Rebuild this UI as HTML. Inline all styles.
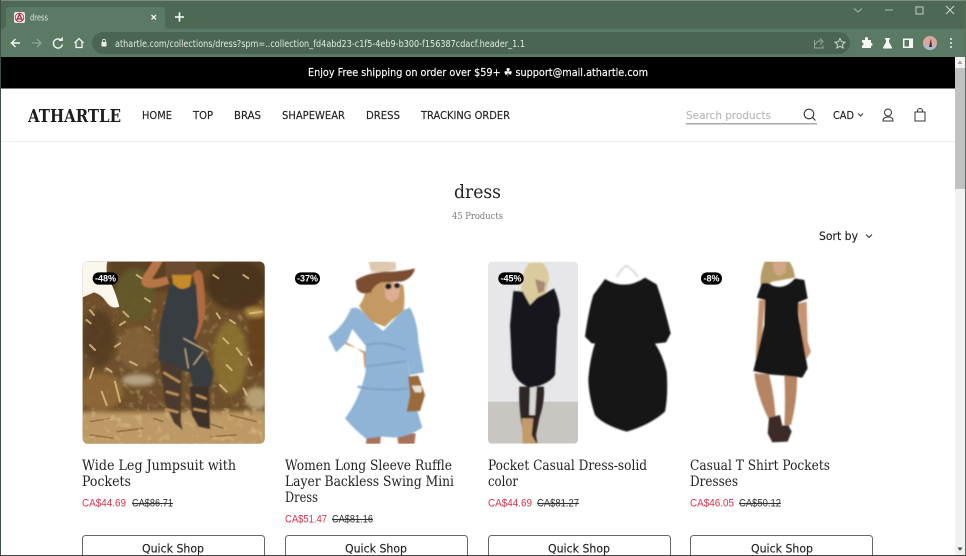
<!DOCTYPE html>
<html><head><meta charset="utf-8"><title>dress</title>
<style>
html,body{margin:0;padding:0;width:966px;height:556px;overflow:hidden;background:#fff}
svg{display:block}
.s{font-family:"DejaVu Sans","Liberation Sans",sans-serif}
.r{font-family:"DejaVu Serif","Liberation Serif",serif}
.t{font-family:"DejaVu Serif","Liberation Serif",serif;font-size:13.5px;fill:#222}
.n{font-family:"DejaVu Sans","Liberation Sans",sans-serif;font-size:10.500px;fill:#222;stroke:#222;stroke-width:.15}
.p{font-family:"Liberation Sans",sans-serif;font-size:11px;fill:#d8324e}
.o{font-family:"Liberation Sans",sans-serif;font-size:11px;fill:#333;text-decoration:line-through}
.b{font-family:"Liberation Sans",sans-serif;font-size:9px;fill:#fff;text-anchor:middle;font-weight:700}
.q{font-family:"DejaVu Sans","Liberation Sans",sans-serif;font-size:11.500px;fill:#222;stroke:#222;stroke-width:.15}
</style></head><body>
<svg width="966" height="556" viewBox="0 0 966 556" xmlns="http://www.w3.org/2000/svg">
<defs>
<filter id="bl" x="-10%" y="-10%" width="120%" height="120%"><feGaussianBlur stdDeviation="2.200"/></filter>
<filter id="bs" x="-10%" y="-10%" width="120%" height="120%"><feGaussianBlur stdDeviation="6"/></filter>
<filter id="nz" x="0" y="0" width="100%" height="100%"><feTurbulence type="fractalNoise" baseFrequency=".04" numOctaves="3" seed="7"/><feGaussianBlur stdDeviation="1.500"/><feColorMatrix values="0 0 0 0 .14  0 0 0 0 .08  0 0 0 0 .02  2.200 0 0 0 -.85"/></filter>
<filter id="nl" x="0" y="0" width="100%" height="100%"><feTurbulence type="fractalNoise" baseFrequency=".05" numOctaves="2" seed="21"/><feGaussianBlur stdDeviation="1.500"/><feColorMatrix values="0 0 0 0 .85  0 0 0 0 .68  0 0 0 0 .38  0 3 0 0 -1.600"/></filter>
<clipPath id="c1"><rect x="38" y="20" width="546" height="546" rx="15"/></clipPath>
<clipPath id="c3"><rect x="24" y="20" width="270" height="546" rx="12"/></clipPath>
<clipPath id="c2"><rect x="0" y="20" width="600" height="546"/></clipPath>
</defs>
<rect width="966" height="556" fill="#fff"/>
<!-- browser chrome -->
<rect width="966" height="57" fill="#4d6954"/>
<rect y="0" width="966" height="1" fill="#7d8f82"/>
<rect y="29" width="966" height="28" fill="#5a7a64"/>
<path d="M1 29Q6 29 6 24V11Q6 7 10 7H161Q165 7 165 11V24Q165 29 170 29Z" fill="#5a7a64"/>
<rect x="92" y="32" width="758" height="22" rx="11" fill="#4a6652"/>
<rect x="14" y="12" width="11" height="11" rx="2" fill="#f0e8e8"/>
<path d="M16.500 21L19.500 14L22.500 21M17.500 19H21.500" stroke="#a02c3c" stroke-width="1.300" fill="none"/>
<circle cx="19.500" cy="17.500" r="4.300" fill="none" stroke="#a02c3c" stroke-width=".8"/>
<text x="30" y="20.500" class="s" font-size="9" fill="#dfe8e2" textLength="18" lengthAdjust="spacingAndGlyphs">dress</text>
<path d="M151.500 15L156 19.500M156 15L151.500 19.500" stroke="#eef3ef" stroke-width="1.300"/>
<path d="M179.500 12.500V21.500M175 17H184" stroke="#fff" stroke-width="1.600"/>
<path d="M854 8.500L858 12L862 8.500" stroke="#a9baae" fill="none"/>
<path d="M885 10H893" stroke="#a9baae"/>
<rect x="916" y="7" width="7" height="7" fill="none" stroke="#c4d0c8"/>
<path d="M946 6L954 14M954 6L946 14" stroke="#c9d5cd"/>
<path d="M20 43H11.500M15.500 39L11.500 43L15.500 47" stroke="#f3f6f4" stroke-width="1.400" fill="none"/>
<path d="M41 43H32M37 39L41 43L37 47" stroke="#8ea594" stroke-width="1.300" fill="none"/>
<path d="M61.500 40.500A4.600 4.600 0 1 0 62.500 44.500" stroke="#f3f6f4" stroke-width="1.400" fill="none"/>
<path d="M58.500 41H62.800V36.800Z" fill="#f3f6f4"/>
<path d="M74.500 43L79 38.500L83.500 43M76 42V47.500H82V42" stroke="#f3f6f4" stroke-width="1.300" fill="none"/>
<rect x="101.500" y="42" width="5" height="4.500" rx=".5" fill="#e8eee9"/>
<path d="M102.500 42V40.800A1.500 1.500 0 0 1 105.500 40.800V42" stroke="#e8eee9" fill="none" stroke-width=".8"/>
<text x="115" y="47" class="s" font-size="9.500" fill="#e2eae4" textLength="410" lengthAdjust="spacingAndGlyphs">athartle.com/collections/dress?spm=..collection_fd4abd23-c1f5-4eb9-b300-f156387cdacf.header_1.1</text>
<path d="M818 41H822M820 38.500L823 41.500L820 44.500M820 41Q816 41 815.500 45M814.500 40V48H823V45.500" stroke="#94a89a" fill="none"/>
<path d="M840 38.500L841.500 41.800L845 42.200L842.400 44.500L843.100 48L840 46.200L836.900 48L837.600 44.500L835 42.200L838.500 41.800Z" stroke="#c9d5cd" fill="none" stroke-width="1"/>
<path d="M862 40H865V38.500A1.500 1.500 0 0 1 868 38.500V40H871V43A1.500 1.500 0 0 1 871 46V48H862V45.500A1.500 1.500 0 0 0 862 42.500Z" fill="#f5f7f5"/>
<path d="M885 38H890V39L889 40V42L892 47.500Q892.500 48.500 891 48.500H884Q882.500 48.500 883 47.500L886 42V40L885 39Z" fill="#f5f7f5"/>
<rect x="903" y="38.500" width="10" height="9.500" fill="#f5f7f5"/><rect x="904.500" y="40" width="4.500" height="6.500" fill="#5a7a64"/>
<circle cx="930" cy="43" r="7" fill="#d8a8a0"/><path d="M923.500 45.500A7 7 0 0 0 936.500 45.500Z" fill="#a9bcd4"/><path d="M929 47L931 38.500L932 47Z" fill="#4a2a2a"/>
<circle cx="951" cy="39" r="1" fill="#eef2ef"/><circle cx="951" cy="43" r="1" fill="#eef2ef"/><circle cx="951" cy="47" r="1" fill="#eef2ef"/>
<!-- banner -->
<rect x="1" y="57" width="954" height="31.500" fill="#000"/>
<text x="308" y="76" class="s" font-size="10.800" fill="#fff" stroke="#fff" stroke-width=".15" textLength="340" lengthAdjust="spacingAndGlyphs">Enjoy Free shipping on order over $59+ ☘ support@mail.athartle.com</text>
<!-- header -->
<rect x="1" y="141" width="954" height="1" fill="#eee"/>
<text x="28" y="122" class="r" font-size="18" font-weight="700" fill="#1c1c1c" textLength="93" lengthAdjust="spacingAndGlyphs">ATHARTLE</text>
<text x="142" y="119" class="n" textLength="30" lengthAdjust="spacingAndGlyphs">HOME</text>
<text x="193" y="119" class="n" textLength="20" lengthAdjust="spacingAndGlyphs">TOP</text>
<text x="234" y="119" class="n" textLength="27" lengthAdjust="spacingAndGlyphs">BRAS</text>
<text x="282" y="119" class="n" textLength="63" lengthAdjust="spacingAndGlyphs">SHAPEWEAR</text>
<text x="366" y="119" class="n" textLength="34" lengthAdjust="spacingAndGlyphs">DRESS</text>
<text x="421" y="119" class="n" textLength="89" lengthAdjust="spacingAndGlyphs">TRACKING ORDER</text>
<text x="686" y="119" class="s" font-size="11" fill="#b8b8b8" stroke="#b8b8b8" stroke-width=".15" textLength="85" lengthAdjust="spacingAndGlyphs">Search products</text>
<rect x="686" y="123" width="131" height="1.500" fill="#aaa"/>
<circle cx="809" cy="114" r="4.800" fill="none" stroke="#333" stroke-width="1.100"/><path d="M812.500 117.500L815.500 120.500" stroke="#333" stroke-width="1.100"/>
<text x="833" y="119" class="s" font-size="10.500" fill="#222" stroke="#222" stroke-width=".15" textLength="21" lengthAdjust="spacingAndGlyphs">CAD</text>
<path d="M858 113.500L860.500 116L863 113.500" stroke="#333" fill="none"/>
<circle cx="888" cy="112.500" r="3.500" fill="none" stroke="#333" stroke-width="1"/><path d="M883 121V120.500Q883 117 888 117Q893 117 893 120.500V121Z" fill="none" stroke="#333" stroke-width="1"/>
<rect x="915" y="112" width="10" height="9" fill="none" stroke="#333" stroke-width="1"/><path d="M917.500 112V111A2.500 2.500 0 0 1 922.500 111V112" fill="none" stroke="#333" stroke-width="1"/>
<!-- collection heading -->
<text x="454" y="198" class="r" font-size="19" fill="#222" textLength="47" lengthAdjust="spacingAndGlyphs">dress</text>
<text x="452" y="219" class="r" font-size="9.500" fill="#777" textLength="51" lengthAdjust="spacingAndGlyphs">45 Products</text>
<text x="819" y="240" class="s" font-size="11.500" fill="#222" stroke="#222" stroke-width=".15" textLength="39" lengthAdjust="spacingAndGlyphs">Sort by</text>
<path d="M866 234.500L869 237.500L872 234.500" stroke="#333" fill="none"/>
<!-- image 1 -->
<g transform="translate(70 255) scale(.33333)"><g clip-path="url(#c1)">
<rect x="0" y="0" width="620" height="600" fill="#70502c"/>
<rect x="38" y="20" width="546" height="546" filter="url(#nz)" opacity=".5"/>
<rect x="38" y="130" width="546" height="436" filter="url(#nl)" opacity=".35"/>
<g filter="url(#bs)" opacity=".88">
<rect x="120" y="0" width="500" height="110" fill="#5a4024"/>
<ellipse cx="195" cy="120" rx="60" ry="80" fill="#625a2a"/>
<ellipse cx="85" cy="250" rx="50" ry="85" fill="#553e24"/>
<ellipse cx="200" cy="280" rx="55" ry="65" fill="#84643a"/>
<ellipse cx="500" cy="90" rx="90" ry="75" fill="#46301a"/>
<ellipse cx="480" cy="310" rx="50" ry="110" fill="#8c7432"/>
<ellipse cx="565" cy="250" rx="30" ry="100" fill="#66401f"/>
<ellipse cx="555" cy="172" rx="30" ry="14" fill="#c09a44"/>
<ellipse cx="205" cy="375" rx="50" ry="18" fill="#bfae90"/>
<ellipse cx="90" cy="410" rx="70" ry="55" fill="#916a38"/>
<ellipse cx="560" cy="430" rx="34" ry="34" fill="#c0ab7e"/>
<rect x="0" y="470" width="620" height="130" fill="#c8a46e"/>
</g>
<path d="M30 20H112Q105 50 118 75Q135 105 148 155Q125 165 108 140Q95 118 72 112Q55 120 30 130Z" fill="#fbf7ec"/>
<path d="M60 165L72 180M50 195L62 205M150 210L165 200M225 215L240 225M135 275L150 265M60 270L75 285M180 320L200 330M110 340L125 350M70 340L60 370M135 380L150 440M95 410L110 450M440 175L450 190M480 195L495 205M460 250L475 265M500 280L515 300M470 330L485 345M535 310L545 330M450 390L470 410M520 400L530 420M540 175L575 170M160 170L175 185M225 130L240 140M200 60L215 70M430 60L445 70M520 60L535 70" stroke="#dcc08e" stroke-width="6" stroke-linecap="round" fill="none" opacity=".8"/>
<path d="M60 500L120 490M140 530L220 520M250 490L280 500M400 500L460 520M480 480L560 500M60 540L130 550M420 545L500 540" stroke="#8a6238" stroke-width="5" fill="none" opacity=".7"/>
<rect x="38" y="460" width="546" height="106" filter="url(#nl)" opacity=".4"/>
<g filter="url(#bl)">
<path d="M285 18H378Q385 50 368 65L310 72L288 65Z" fill="#6c4c30"/>
<path d="M250 15C238 40 214 62 214 84C224 108 268 98 298 86L290 64C268 70 254 74 246 72C258 55 270 35 280 15Z" fill="#b87646"/>
<path d="M368 58Q388 30 398 60Q408 130 405 180Q395 225 375 255L352 282L345 240L372 190L375 90Z" fill="#af6a3e"/>
<path d="M306 60H366L360 98Q335 115 310 95Z" fill="#c68a2c"/>
<path d="M300 88L314 90Q335 112 362 92L378 85L386 200Q380 235 372 250Q410 300 430 350L422 395L395 412L370 400L360 352L300 336L265 315L270 210Z" fill="#393c43"/>
<path d="M270 315L335 340L332 500L338 525L312 503L285 440Z" fill="#4c3a2e"/>
<path d="M360 395L416 395L420 522L386 515L366 480Z" fill="#3e3029"/>
<path d="M280 352L330 382M288 410L326 420M378 420L410 432M370 462L410 470M285 462L325 472" stroke="#c49658" stroke-width="7"/>
<path d="M340 250L415 290M400 290L370 330M345 280L355 340" stroke="#dcc08e" stroke-width="3" fill="none"/>
</g></g>
<rect x="68" y="52" width="76" height="37" rx="18" fill="#000"/></g>
<text x="105.500" y="281.500" class="b">-48%</text>
<!-- image 2 -->
<g transform="translate(275 255) scale(.33333)"><g filter="url(#bl)" clip-path="url(#c2)">
<path d="M265 295Q240 275 215 262L180 285L170 250L212 268L272 290Q280 315 268 342Z" fill="#c99878"/>
<path d="M276 540H318L315 572H272ZM366 535H422L418 572H370Z" fill="#a87258"/>
<path d="M280 20Q320 14 362 22L364 50L290 55Z" fill="#dccab0"/>
<path d="M290 45Q320 60 362 40L364 52L290 60Z" fill="#efe6d6"/>
<path d="M272 100Q270 130 252 152Q265 175 290 200L330 215L350 195L385 170Q392 130 385 90L300 70Z" fill="#c49a62"/>
<path d="M326 85H378L370 130L350 142L332 128Z" fill="#dcae92"/>
<path d="M242 76Q280 50 345 50Q390 48 420 40Q412 72 378 80L318 82Q295 92 288 112Q255 122 245 100Z" fill="#7d4e30"/>
<ellipse cx="340" cy="94" rx="10" ry="9" fill="#222"/><ellipse cx="366" cy="92" rx="9" ry="8" fill="#222"/>
<path d="M228 160Q245 155 258 165Q295 205 325 228Q350 200 385 165L405 158Q428 200 430 260L447 352L405 360L396 300Q410 420 442 518Q400 545 360 548L320 545L272 550Q240 525 210 490Q255 430 272 350L272 272L232 222L215 262L183 292L160 245Q205 215 228 160Z" fill="#8fb4d6"/>
<path d="M275 270Q330 255 392 285M272 335L396 318M248 395Q320 410 398 400" stroke="#7ea3c6" stroke-width="6" fill="none"/>
<path d="M400 365L430 362L450 420L435 468L395 470L405 420Z" fill="#9a6a3a"/>
<path d="M410 392L440 392L440 412L420 412Z" fill="#e8e0d0"/>
</g>
<rect x="60" y="52" width="75" height="37" rx="18" fill="#000"/></g>
<text x="307.500" y="281.500" class="b">-37%</text>
<!-- image 3 -->
<g transform="translate(480 255) scale(.33333)">
<g clip-path="url(#c3)"><rect x="24" y="20" width="270" height="546" fill="#e7e7ea"/><rect x="24" y="440" width="270" height="126" fill="#c9c6c1"/>
<g filter="url(#bl)">
<path d="M118 395H192Q195 440 178 490L168 540L172 565H135L128 530Q115 450 118 395Z" fill="#2e2825"/>
<path d="M125 490L160 490L155 540L170 566H128Z" fill="#c49a6a"/>
<path d="M150 395L170 395L165 480L148 480Z" fill="#dad8d4"/>
<path d="M148 24H188Q205 40 208 70L195 125L165 135L155 175L130 175Q118 140 124 100Q125 50 148 24Z" fill="#d9cb9e"/>
<path d="M165 72L196 82L192 108L175 115Z" fill="#a88a74"/>
<path d="M100 108L128 110L150 150L172 128L196 115L222 100Q240 140 240 180L232 212L225 360Q205 390 150 398Q110 385 96 340L90 210Z" fill="#17171a"/>
</g></g>
<g filter="url(#bl)">
<path d="M410 66Q425 40 440 32Q458 45 475 66" fill="none" stroke="#dcdcdc" stroke-width="6"/>
<path d="M375 72Q435 108 495 68L530 88Q552 150 572 235L558 262L525 266Q548 300 560 350Q565 420 555 470Q510 510 440 530Q370 510 345 480Q325 420 325 370Q330 310 345 265L335 265L315 245Q325 170 340 120Z" fill="#161618"/>
</g>
<rect x="55" y="52" width="76" height="37" rx="18" fill="#000"/></g>
<text x="511" y="281.500" class="b">-45%</text>
<!-- image 4 -->
<g transform="translate(685 255) scale(.33333)"><g filter="url(#bl)" clip-path="url(#c2)">
<path d="M208 355L252 358Q268 420 272 490L250 490Q215 420 208 355ZM298 362L336 362Q338 430 318 510L298 510Q302 430 298 362Z" fill="#b58564"/>
<path d="M252 488L285 480L292 512L310 510L320 530L308 560L262 562L248 535Z" fill="#3a2c28"/>
<path d="M222 135L240 135L232 230L240 290L222 320L212 310Z" fill="#c69470"/>
<path d="M338 145L365 140L368 260L378 290L362 315L352 280Z" fill="#c69470"/>
<path d="M240 18H312Q328 40 330 68L262 80Q240 95 228 92Q222 60 240 18Z" fill="#b59b68"/>
<path d="M262 18H305L302 52L282 65L266 50Z" fill="#d2a684"/>
<path d="M230 85Q250 80 262 92Q300 105 330 70L358 75L368 130L340 142Q338 180 345 210L368 340L352 368L300 362L250 358L205 348L238 210L240 135L215 128Z" fill="#141416"/>
</g>
<rect x="48" y="52" width="63" height="37" rx="18" fill="#000"/></g>
<text x="711.500" y="281.500" class="b">-8%</text>
<!-- titles -->
<text x="82" y="470" class="t" textLength="154" lengthAdjust="spacingAndGlyphs">Wide Leg Jumpsuit with</text>
<text x="82" y="486" class="t" textLength="49" lengthAdjust="spacingAndGlyphs">Pockets</text>
<text x="285" y="470" class="t" textLength="167" lengthAdjust="spacingAndGlyphs">Women Long Sleeve Ruffle</text>
<text x="285" y="486" class="t" textLength="169" lengthAdjust="spacingAndGlyphs">Layer Backless Swing Mini</text>
<text x="285" y="502" class="t" textLength="33" lengthAdjust="spacingAndGlyphs">Dress</text>
<text x="488" y="470" class="t" textLength="159" lengthAdjust="spacingAndGlyphs">Pocket Casual Dress-solid</text>
<text x="488" y="486" class="t" textLength="30" lengthAdjust="spacingAndGlyphs">color</text>
<text x="690" y="470" class="t" textLength="140" lengthAdjust="spacingAndGlyphs">Casual T Shirt Pockets</text>
<text x="690" y="486" class="t" textLength="48" lengthAdjust="spacingAndGlyphs">Dresses</text>
<!-- prices -->
<text x="82" y="506.500" class="p" textLength="44" lengthAdjust="spacingAndGlyphs">CA$44.69</text>
<text x="132" y="506.500" class="o" textLength="41" lengthAdjust="spacingAndGlyphs">CA$86.71</text>
<text x="285" y="522.500" class="p" textLength="42" lengthAdjust="spacingAndGlyphs">CA$51.47</text>
<text x="332" y="522.500" class="o" textLength="41" lengthAdjust="spacingAndGlyphs">CA$81.16</text>
<text x="488" y="506.500" class="p" textLength="44" lengthAdjust="spacingAndGlyphs">CA$44.69</text>
<text x="537" y="506.500" class="o" textLength="42" lengthAdjust="spacingAndGlyphs">CA$81.27</text>
<text x="690" y="506.500" class="p" textLength="44" lengthAdjust="spacingAndGlyphs">CA$46.05</text>
<text x="739" y="506.500" class="o" textLength="42" lengthAdjust="spacingAndGlyphs">CA$50.12</text>
<!-- buttons -->
<g fill="#fff" stroke="#666"><rect x="82.500" y="535.500" width="182" height="40" rx="3"/><rect x="285.500" y="535.500" width="182" height="40" rx="3"/><rect x="488.500" y="535.500" width="182" height="40" rx="3"/><rect x="690.500" y="535.500" width="182" height="40" rx="3"/></g>
<text x="142" y="552.500" class="q" textLength="62" lengthAdjust="spacingAndGlyphs">Quick Shop</text>
<text x="345" y="552.500" class="q" textLength="62" lengthAdjust="spacingAndGlyphs">Quick Shop</text>
<text x="548" y="552.500" class="q" textLength="62" lengthAdjust="spacingAndGlyphs">Quick Shop</text>
<text x="751" y="552.500" class="q" textLength="62" lengthAdjust="spacingAndGlyphs">Quick Shop</text>
<!-- scrollbar / frame -->
<rect x="955" y="57" width="10" height="499" fill="#f1f1f1"/>
<rect x="955" y="68" width="10" height="121" fill="#c1c1c1"/>
<path d="M960 60.500L957.500 64H962.500Z" fill="#a0a0a0"/><path d="M960 551L957.500 547.500H962.500Z" fill="#505050"/>
<rect x="0" y="0" width="1" height="556" fill="#3e4f43"/>
<rect x="965" y="0" width="1" height="556" fill="#5c6f62"/>
<rect x="0" y="555" width="966" height="1" fill="#444"/>
</svg>
</body></html>
